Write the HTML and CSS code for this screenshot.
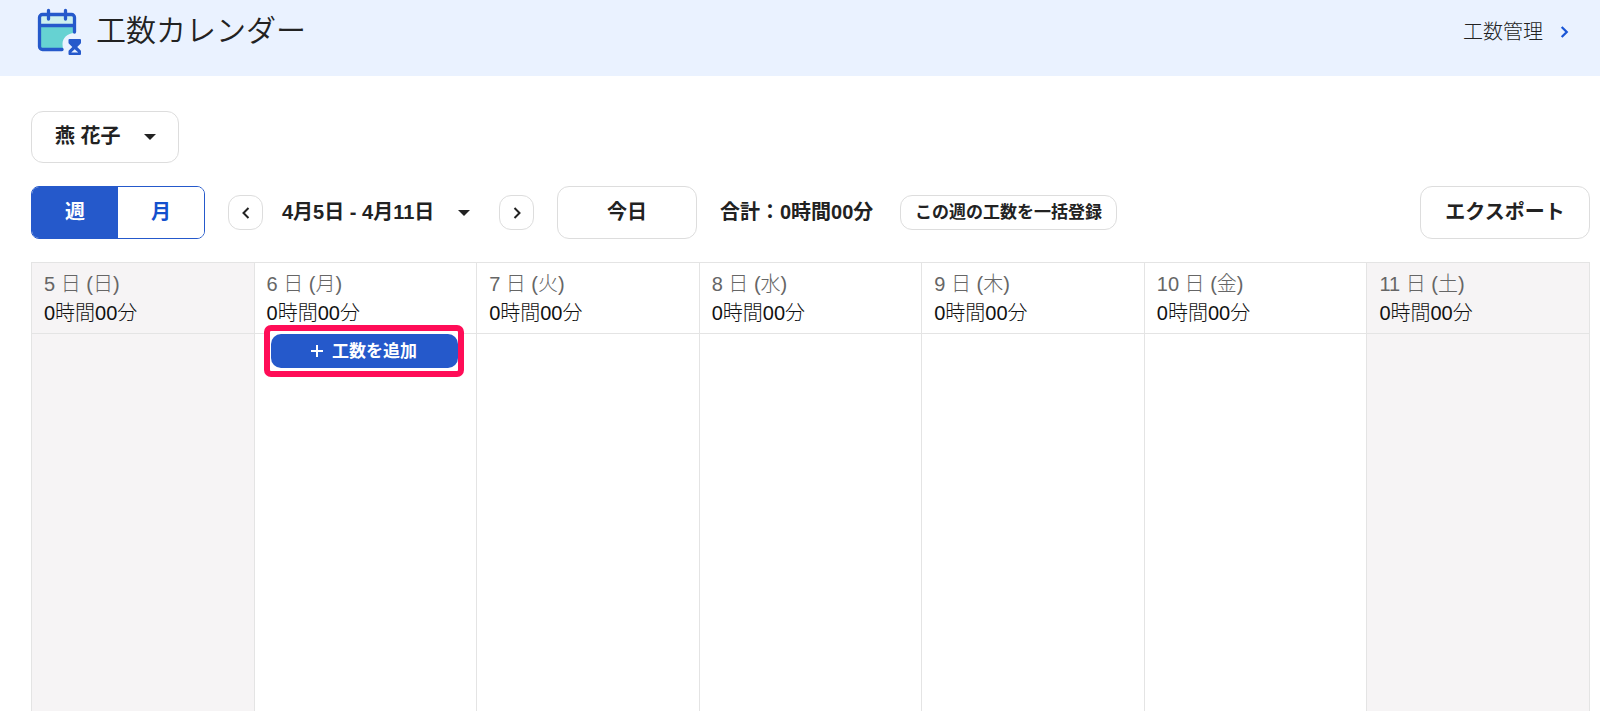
FILE: index.html
```html
<!DOCTYPE html>
<html lang="ja">
<head>
<meta charset="utf-8">
<meta name="viewport" content="width=device-width, initial-scale=1">
<title>工数カレンダー</title>
<link rel="stylesheet" href="styles.css">
</head>
<body>
<header class="page-header">
  <svg class="page-icon" viewBox="36 8 48 48" aria-hidden="true">
    <path d="M39.500 26V16.500a3 3 0 0 1 3-3h29a3 3 0 0 1 3 3V26z" fill="#cdf0ef"/>
    <path d="M39.500 26h35v7c-7 0-12 5-12 11 0 2 .3 4 1 5.700H42.500a3 3 0 0 1-3-3z" fill="#66d2d2"/>
    <path d="M74.500 32V17.500a3 3 0 0 0-3-3h-29a3 3 0 0 0-3 3v29a3 3 0 0 0 3 3h19.500M39.500 25.500h35M48.500 10.500v8.500M65.500 10.500v8.500" fill="none" stroke="#2559cb" stroke-width="3.300" stroke-linecap="round"/>
    <path d="M69.500 39h10.500q1 0 1 1v2.500q0 .7-.5 1.200L77.200 47l3.300 3.300q.5.500.5 1.200V54q0 1-1 1H69.500q-1 0-1-1v-2.500q0-.7.500-1.200l3.300-3.300-3.300-3.300q-.5-.5-.5-1.200V40q0-1 1-1z" fill="#2559cb"/>
    <path d="M71.200 52.500l3.500-3.200 3.500 3.200z" fill="#eaf2ff"/>
  </svg>
  <h1 class="page-title">工数カレンダー</h1>
  <a class="header-link" href="#">工数管理
    <svg class="link-chevron" viewBox="0 0 8 12" aria-hidden="true"><path d="M1.500 1.500 6 6l-4.500 4.500"/></svg>
  </a>
</header>
<main class="content">
  <div class="user-picker">
    <select class="button user-select" aria-label="ユーザー"><option>燕 花子</option></select>
    <span class="caret user-caret"></span>
  </div>
  <div class="toolbar">
    <div class="segments">
      <button class="segment segment-active" type="button" aria-pressed="true">週</button>
      <button class="segment" type="button" aria-pressed="false">月</button>
    </div>
    <div class="range">
      <button class="button step" type="button" aria-label="前の週"><svg class="step-icon" viewBox="0 0 8 12"><path d="M6.500 1 1.500 6l5 5"/></svg></button>
      <button class="range-button" type="button">4月5日 - 4月11日<span class="caret"></span></button>
      <button class="button step" type="button" aria-label="次の週"><svg class="step-icon" viewBox="0 0 8 12"><path d="M1.500 1l5 5-5 5"/></svg></button>
    </div>
    <button class="button today" type="button">今日</button>
    <p class="total">合計：0時間00分</p>
    <button class="button bulk" type="button">この週の工数を一括登録</button>
    <button class="button export" type="button">エクスポート</button>
  </div>
  <table class="calendar">
    <thead>
      <tr>
        <th class="day weekend" scope="col"><span class="date">5 日 (日)</span><span class="hours">0時間00分</span></th>
        <th class="day" scope="col"><span class="date">6 日 (月)</span><span class="hours">0時間00分</span></th>
        <th class="day" scope="col"><span class="date">7 日 (火)</span><span class="hours">0時間00分</span></th>
        <th class="day" scope="col"><span class="date">8 日 (水)</span><span class="hours">0時間00分</span></th>
        <th class="day" scope="col"><span class="date">9 日 (木)</span><span class="hours">0時間00分</span></th>
        <th class="day" scope="col"><span class="date">10 日 (金)</span><span class="hours">0時間00分</span></th>
        <th class="day weekend" scope="col"><span class="date">11 日 (土)</span><span class="hours">0時間00分</span></th>
      </tr>
    </thead>
    <tbody>
      <tr>
        <td class="slot weekend"></td>
        <td class="slot">
          <div class="highlight">
            <button class="add" type="button"><svg class="plus" viewBox="0 0 12 12" aria-hidden="true"><path d="M6 0v12M0 6h12"/></svg>工数を追加</button>
          </div>
        </td>
        <td class="slot"></td>
        <td class="slot"></td>
        <td class="slot"></td>
        <td class="slot"></td>
        <td class="slot weekend"></td>
      </tr>
    </tbody>
  </table>
</main>
</body>
</html>
```
FILE: styles.css
```css
* {
  box-sizing: border-box;
}

body {
  margin: 0;
  overflow: hidden;
  background: #fff;
  color: #222;
  font-family: "Liberation Sans", "Noto Sans CJK JP", sans-serif;
  font-size: 20px;
  line-height: 29px;
}

button,
select {
  margin: 0;
  padding: 0;
  font: inherit;
  font-weight: 700;
  color: inherit;
  cursor: pointer;
}

.page-header {
  display: flex;
  align-items: flex-start;
  height: 76px;
  padding: 8px 31px 0 36px;
  background: #eaf2ff;
}

.page-icon {
  width: 48px;
  height: 48px;
}

.page-title {
  margin: 0 auto 0 12px;
  font-size: 30px;
  font-weight: 350;
  line-height: 46px;
}

.header-link {
  display: flex;
  align-items: center;
  gap: 17px;
  font-weight: 300;
  line-height: 48px;
  color: inherit;
  text-decoration: none;
}

.link-chevron {
  width: 9px;
  height: 14px;
  fill: none;
  stroke: #1a56d6;
  stroke-width: 2;
}

.content {
  padding: 35px 10px 0 31px;
}

.button {
  border: 1px solid #ddd;
  border-radius: 12px;
  background: #fff;
}

.user-picker {
  position: relative;
  width: 148px;
}

.user-select {
  display: block;
  width: 100%;
  height: 52px;
  padding: 0 0 2px 23px;
  appearance: none;
}

.caret {
  border: 6px solid transparent;
  border-top-color: #222;
  border-bottom: 0;
}

.user-caret {
  position: absolute;
  top: 23px;
  right: 23px;
  pointer-events: none;
}

.toolbar {
  display: flex;
  align-items: center;
  gap: 23px;
  margin: 23px 0;
}

.segments {
  display: flex;
  width: 174px;
  height: 53px;
  overflow: hidden;
  border: 1px solid #2559cb;
  border-radius: 8px;
}

.segment {
  flex: 1;
  border: 0;
  background: #fff;
  color: #1450cd;
}

.segment-active {
  background: #2559cb;
  color: #fff;
}

.range {
  display: flex;
  align-items: center;
  gap: 18px;
}

.step {
  display: grid;
  place-items: center;
  width: 35px;
  height: 35px;
}

.step-icon {
  width: 8px;
  height: 12px;
  fill: none;
  stroke: #222;
  stroke-width: 2;
}

.range-button {
  display: flex;
  align-items: center;
  gap: 24px;
  width: 200px;
  padding-left: 1px;
  border: 0;
  background: none;
}

.today {
  width: 140px;
  height: 53px;
}

.total {
  min-width: 157px;
  margin: 0;
  font-weight: 700;
}

.bulk {
  width: 217px;
  height: 35px;
  font-size: 17px;
  white-space: nowrap;
}

.export {
  width: 170px;
  height: 53px;
  margin-left: auto;
}

.calendar {
  width: 100%;
  border-collapse: collapse;
  table-layout: fixed;
}

.day,
.slot {
  border: 1px solid #e4e4e4;
}

.day {
  padding: 7px 12px 5px;
  font-weight: 300;
  text-align: left;
}

.date,
.hours {
  display: block;
}

.date {
  color: #666;
}

.hours {
  color: #111;
}

.slot {
  height: calc(100vh - 332px);
  padding: 0;
  vertical-align: top;
}

.weekend {
  background: #f6f4f5;
}

.highlight {
  position: relative;
  width: 200px;
  margin: -9px 0 0 9px;
  padding: 3px 0 3px 1px;
  border: 6px solid #ff0d57;
  border-radius: 7px;
  background: #fff;
}

.add {
  display: flex;
  align-items: center;
  justify-content: center;
  gap: 9px;
  width: 100%;
  height: 34px;
  border: 0;
  border-radius: 10px;
  background: #2559cb;
  color: #fff;
  font-size: 17px;
}

.plus {
  width: 12px;
  height: 12px;
  stroke: #fff;
  stroke-width: 2;
}
```
